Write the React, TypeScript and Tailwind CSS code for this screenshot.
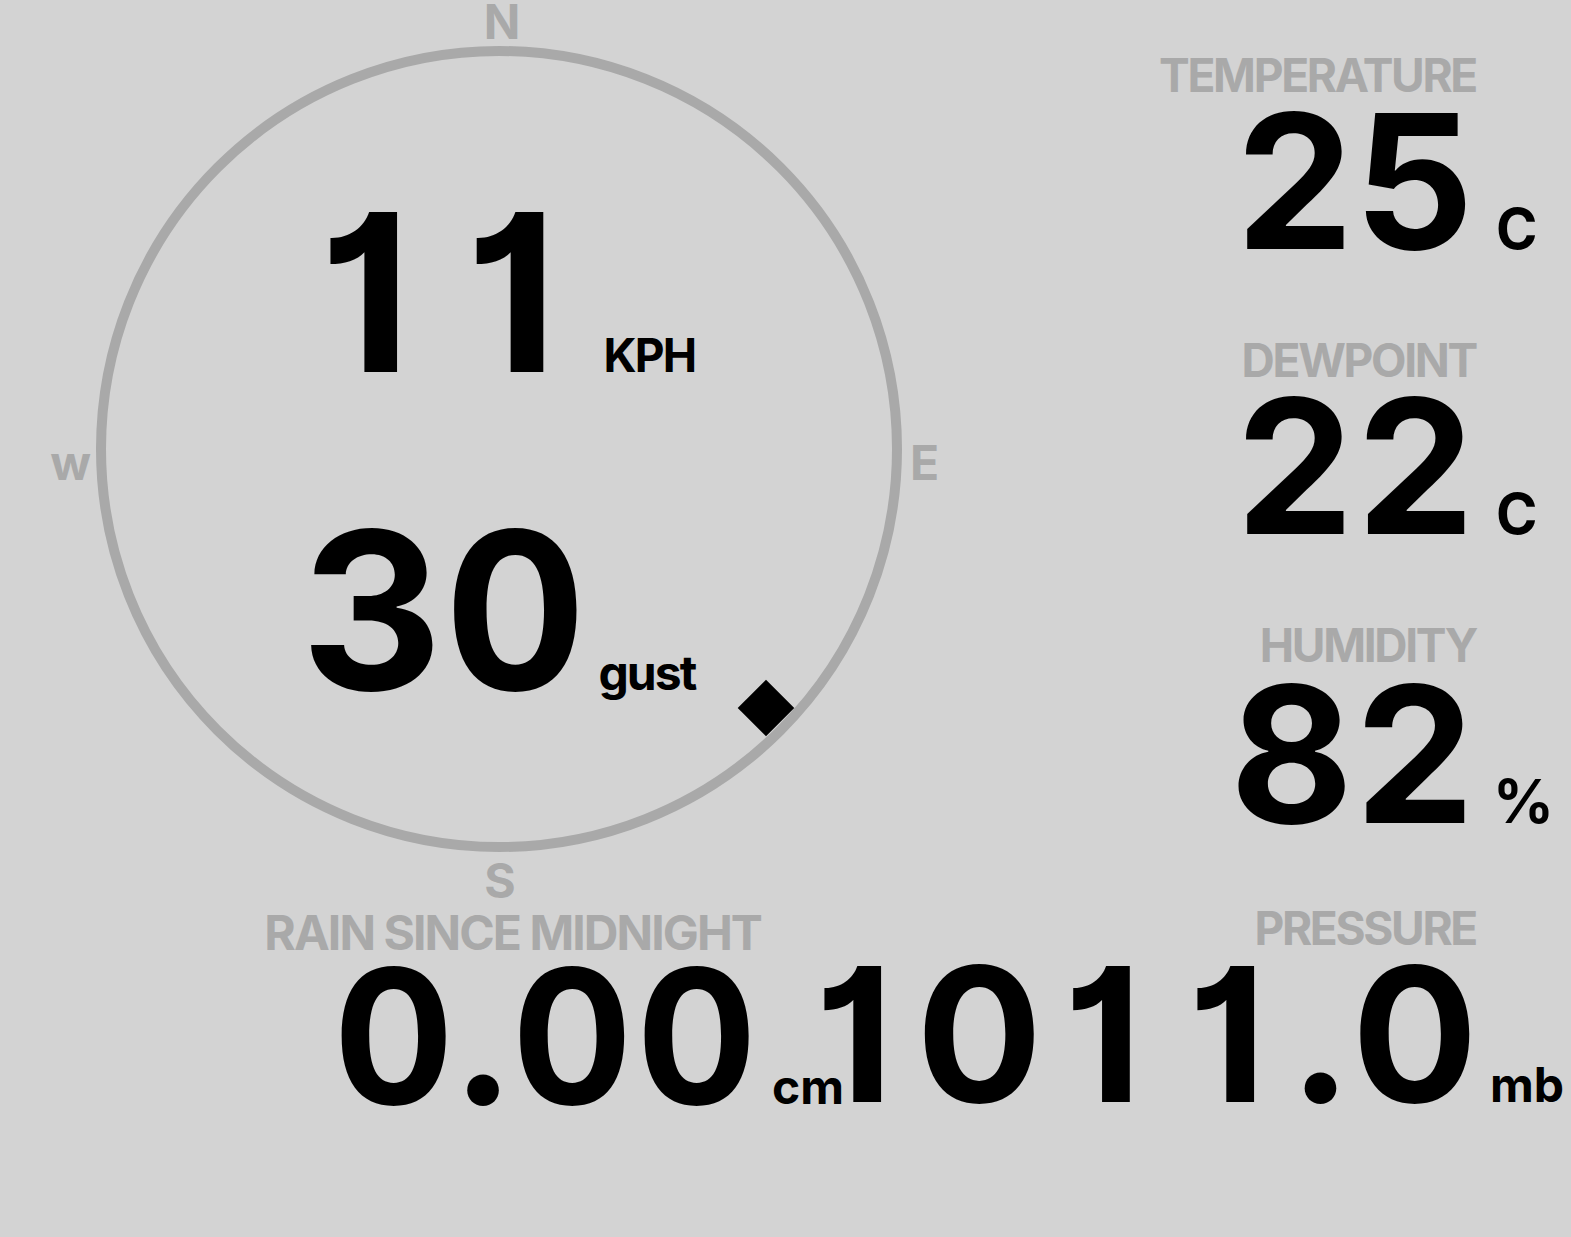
import React from "react";

// each figure sits in a fixed cell, like tabular figures, but keeps the footless "1"
function Figures({ text }: { text: string }) {
    return (
        <>
            {text.split("").map((ch, i) =>
                ch === "." ? (
                    <span key={i}>.</span>
                ) : (
                    <span key={i} className="inline-block w-[0.665em] text-center">
                        {ch}
                    </span>
                )
            )}
        </>
    );
}

type ReadingProps = {
    label: string;
    value: React.ReactNode;
    unit: string;
    valueClass: string;
    unitClass: string;
    labelGap: string;
};

function Reading({ label, value, unit, valueClass, unitClass, labelGap }: ReadingProps) {
    return (
        <div className="flex flex-col items-end">
            <div className={`mr-[95px] text-[46px] leading-none tracking-[-0.05em] text-[#a9a9a9] ${labelGap}`}>
                {label}
            </div>
            <div className="flex items-baseline">
                <span className={`leading-[0.8] ${valueClass}`}>{value}</span>
                <span className={`leading-none ${unitClass}`}>{unit}</span>
            </div>
        </div>
    );
}

function Dial() {
    return (
        <div className="relative col-start-2 row-start-2 h-[806px] w-[806px] rounded-full border-[10px] border-[#a9a9a9] pl-[186px] pt-[126px] text-black">
            <div className="flex items-baseline gap-[19px]">
                <span className="text-[220px] leading-none [font-feature-settings:'cv01']">
                    <Figures text="11" />
                </span>
                <span className="text-[46px] leading-none tracking-[-0.04em]">KPH</span>
            </div>
            <div className="ml-[10px] mt-[98px] flex items-baseline gap-[12px]">
                <span className="text-[220px] leading-none tabular-nums">30</span>
                <span className="text-[48px] leading-none tracking-[-0.04em]">gust</span>
            </div>
            {/* wind direction marker */}
            <div className="absolute left-[640px] top-[632px] h-10 w-10 rotate-45 bg-black" />
        </div>
    );
}

function Compass() {
    return (
        <div className="grid shrink-0 grid-cols-[96px_806px_auto] grid-rows-[46px_806px_auto] text-[48px] leading-none text-[#a9a9a9]">
            <div className="col-start-2 row-start-1 self-end justify-self-center pl-[6px]">N</div>
            <div className="col-start-1 row-start-2 mt-[393px] justify-self-end pr-[5px]">w</div>
            <Dial />
            <div className="col-start-3 row-start-2 mt-[393px] pl-2">E</div>
            <div className="col-start-2 row-start-3 mt-[5px] justify-self-center pl-[2px]">S</div>
        </div>
    );
}

export default function App() {
    return (
        <div className="h-screen w-full overflow-hidden bg-[#d3d3d3] font-[family-name:Inter,sans-serif] font-bold text-black">
            <div className="flex h-[905px]">
                <Compass />
                <div className="flex flex-1 flex-col items-end gap-[80px] pt-[52px]">
                    <Reading
                        label="TEMPERATURE"
                        value="25"
                        unit="C"
                        valueClass="text-[187px] tabular-nums"
                        unitClass="ml-[20px] w-[75px] text-[56px]"
                        labelGap="mb-[9px]"
                    />
                    <Reading
                        label="DEWPOINT"
                        value="22"
                        unit="C"
                        valueClass="text-[187px] tabular-nums"
                        unitClass="ml-[20px] w-[75px] text-[56px]"
                        labelGap="mb-[9px]"
                    />
                    <Reading
                        label="HUMIDITY"
                        value="82"
                        unit="%"
                        valueClass="text-[190px] tabular-nums"
                        unitClass="ml-[17px] w-[78px] text-[60px]"
                        labelGap="mb-[10px]"
                    />
                </div>
            </div>

            <div className="flex">
                <div className="flex w-[761px] shrink-0 flex-col items-end pt-[4px]">
                    <div className="mb-[5px] text-[48px] leading-none tracking-[-0.04em] text-[#a9a9a9]">
                        RAIN SINCE MIDNIGHT
                    </div>
                    <div className="-mr-[81px] flex items-baseline gap-[11px]">
                        <span className="text-[187px] leading-[0.8] tracking-[0.02em] tabular-nums">0.00</span>
                        <span className="w-[70px] text-[48px] leading-none">cm</span>
                    </div>
                </div>
                <div className="flex flex-1 flex-col items-end">
                    <Reading
                        label="PRESSURE"
                        value={<Figures text="1011.0" />}
                        unit="mb"
                        valueClass="text-[187px] [font-feature-settings:'cv01']"
                        unitClass="ml-[14px] w-[81px] text-[48px]"
                        labelGap="mb-[9px]"
                    />
                </div>
            </div>
        </div>
    );
}
